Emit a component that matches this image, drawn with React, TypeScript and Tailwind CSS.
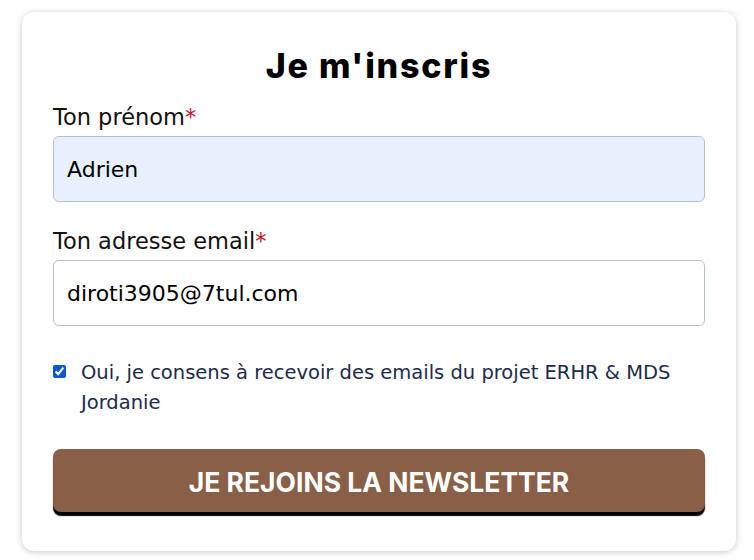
import React from "react";

export default function App() {
  const body = { fontFamily: '"DejaVu Sans", "Noto Sans", sans-serif' };
  const head = { fontFamily: 'Inter, "Noto Sans", sans-serif' };
  return (
    <div className="w-[754px] h-[560px] bg-white overflow-hidden" style={body}>
      <div className="ml-[22px] mt-[12px] w-[714px] h-[539px] rounded-[12px] bg-white shadow-[0_1px_6px_rgba(0,0,0,0.22)] px-[31px] pt-[34px]">
        <h1 className="text-center text-[34px] leading-[40px] font-extrabold text-black tracking-[1.8px]" style={head}>
          Je m'inscris
        </h1>
        <label className="block mt-[16px] text-[22.5px] leading-[30px] text-[#111]">
          Ton prénom<span className="text-[#c8102e]">*</span>
        </label>
        <div className="mt-[4px] h-[66px] rounded-[6px] border border-[#b7bfcc] bg-[#e8f0fe] px-[13px] flex items-center text-[22px] text-black">
          Adrien
        </div>
        <label className="block mt-[24px] text-[22.5px] leading-[30px] text-[#111]">
          Ton adresse email<span className="text-[#c8102e]">*</span>
        </label>
        <div className="mt-[4px] h-[66px] rounded-[6px] border border-[#b7bfcc] bg-white px-[13px] flex items-center text-[22px] text-black">
          diroti3905@7tul.com
        </div>
        <div className="mt-[32px] flex items-start gap-[15px]">
          <input type="checkbox" defaultChecked className="mt-[7px] w-[13px] h-[13px] accent-[#0b57d0] shrink-0" />
          <p className="text-[19.5px] leading-[30px] text-[#1c2b4a]">
            Oui, je consens à recevoir des emails du projet ERHR &amp; MDS Jordanie
          </p>
        </div>
        <button className="mt-[31px] w-full h-[63px] pt-[5px] rounded-[8px] bg-[#8a5f48] shadow-[0_4px_1px_#000] text-white font-bold uppercase text-[26.5px]" style={head}>
          Je rejoins la newsletter
        </button>
      </div>
    </div>
  );
}
